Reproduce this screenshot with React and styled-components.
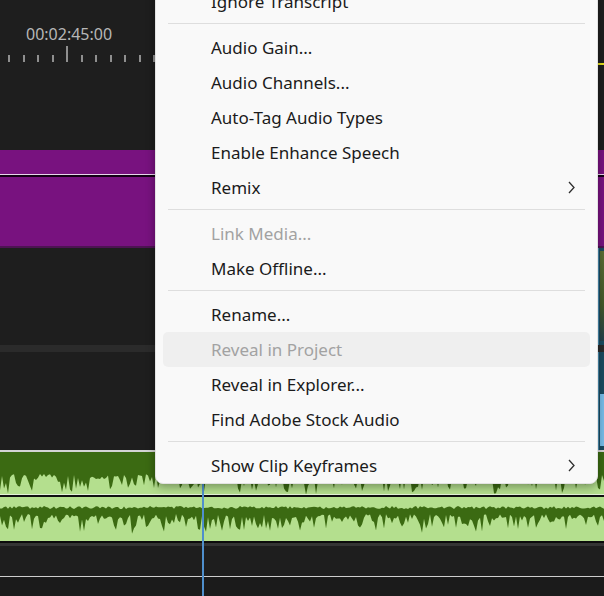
import styled, { createGlobalStyle } from "styled-components";

const GlobalStyle = createGlobalStyle`
  html, body {
    margin: 0;
    padding: 0;
    background: #1e1e1e;
    overflow: hidden;
  }
  * { box-sizing: border-box; }
`;

// deterministic noise so the waveform is the same each render
const rand = (() => {
  let s = 1337;
  return () => {
    s = (s * 16807) % 2147483647;
    return (s - 1) / 2147483646;
  };
})();

const buildUpper = () => {
  const pts = [];
  for (let x = 604; x >= 0; x -= 2) {
    let y = 22 + rand() * 5;
    if (rand() > 0.55) y += 4 + rand() * 12;
    pts.push(`${x},${y.toFixed(1)}`);
  }
  return `M0,0 L604,0 L${pts.join(" L")} Z`;
};

const buildLower = () => {
  const top = [];
  const bottom = [];
  for (let x = 0; x <= 604; x += 2) {
    top.push(`${x},${(9 + rand() * 3).toFixed(1)}`);
  }
  for (let x = 604; x >= 0; x -= 2) {
    let y = 17 + rand() * 5;
    if (rand() > 0.55) y += 3 + rand() * 12;
    bottom.push(`${x},${y.toFixed(1)}`);
  }
  return `M${top.join(" L")} L${bottom.join(" L")} Z`;
};

const UPPER = buildUpper();
const LOWER = buildLower();

const TICKS = Array.from({ length: 41 }, (_, i) => i);

const MENU = [
  { label: "Ignore Transcript" },
  "sep",
  { label: "Audio Gain..." },
  { label: "Audio Channels..." },
  { label: "Auto-Tag Audio Types" },
  { label: "Enable Enhance Speech" },
  { label: "Remix", sub: true },
  "sep",
  { label: "Link Media...", disabled: true },
  { label: "Make Offline..." },
  "sep",
  { label: "Rename..." },
  { label: "Reveal in Project", disabled: true, hover: true },
  { label: "Reveal in Explorer..." },
  { label: "Find Adobe Stock Audio" },
  "sep",
  { label: "Show Clip Keyframes", sub: true },
];

const Chevron = () => (
  <svg width="7" height="13" viewBox="0 0 7 13" fill="none">
    <path d="M1 1 L6 6.5 L1 12" stroke="#2e2e2e" strokeWidth="1.3" />
  </svg>
);

export default function App() {
  return (
    <>
      <GlobalStyle />
      <Timeline>
        <Ruler>
          <Timecode>00:02:45:00</Timecode>
          <TickRow>
            {TICKS.map((i) => (
              <Tick key={i} $major={i === 4} />
            ))}
          </TickRow>
          <WorkArea />
        </Ruler>

        <PurpleClip>
          <PurpleHead />
          <PurpleBody />
        </PurpleClip>

        <VideoTrack $h={97}>
          <EdgeClip>
            <Thumb />
          </EdgeClip>
        </VideoTrack>
        <TrackDivider />
        <VideoTrack $h={98}>
          <EdgeClip>
            <SkyBlock />
          </EdgeClip>
        </VideoTrack>

        <AudioClip>
          <Channel $h={42}>
            <Wave viewBox="0 0 604 42" preserveAspectRatio="none">
              <path d={UPPER} fill="#3b6a12" />
            </Wave>
          </Channel>
          <ChannelGap />
          <Channel $h={44}>
            <Wave viewBox="0 0 604 44" preserveAspectRatio="none">
              <path d={LOWER} fill="#3b6a12" />
            </Wave>
          </Channel>
        </AudioClip>
        <EmptyTrack $h={30} />
        <EmptyTrack $h={20} $light />

        <Playhead />

        <Menu>
          {MENU.map((item, i) =>
            item === "sep" ? (
              <Separator key={i} />
            ) : (
              <Item key={i} $disabled={item.disabled} $hover={item.hover}>
                <span>{item.label}</span>
                {item.sub && <Chevron />}
              </Item>
            )
          )}
        </Menu>
      </Timeline>
    </>
  );
}

const Timeline = styled.div`
  position: relative;
  width: 604px;
  height: 596px;
  overflow: hidden;
  display: flex;
  flex-direction: column;
  background: #1e1e1e;
`;

const Ruler = styled.div`
  height: 150px;
  flex: none;
  padding-top: 24px;
  display: flex;
  flex-direction: column;
`;

const Timecode = styled.div`
  padding-left: 26px;
  height: 20px;
  line-height: 20px;
  font-family: "Noto Sans", sans-serif;
  font-size: 16px;
  color: #b7b7b7;
`;

const TickRow = styled.div`
  margin-top: 2px;
  height: 16px;
  padding-left: 8px;
  display: flex;
  align-items: flex-end;
`;

const Tick = styled.div`
  flex: 0 0 14.55px;
  height: ${(p) => (p.$major ? 16 : 7)}px;
  &::before {
    content: "";
    display: block;
    width: 2px;
    height: 100%;
    background: #8f8f8f;
  }
`;

const WorkArea = styled.div`
  margin: 1px 0 0 560px;
  height: 2px;
  background: #e6df1c;
`;

const PurpleClip = styled.div`
  height: 98px;
  flex: none;
  display: flex;
  flex-direction: column;
  background: #78127f;
  border-bottom: 2px solid #4d1353;
`;

const PurpleHead = styled.div`
  height: 27px;
  border-bottom: 2px solid #120014;
  box-shadow: inset 0 -1px 0 #e9d3ec;
  margin-bottom: 0;
`;

const PurpleBody = styled.div`
  flex: 1;
`;

const VideoTrack = styled.div`
  height: ${(p) => p.$h}px;
  flex: none;
  display: flex;
  justify-content: flex-end;
`;

const TrackDivider = styled.div`
  height: 7px;
  flex: none;
  background: #2b2b2b;
`;

const EdgeClip = styled.div`
  width: 6px;
  background: #1b4b60;
  border-left: 1px solid #4b8db0;
  display: flex;
  flex-direction: column;
  justify-content: flex-end;
  padding: 3px 0 4px 1px;
`;

const Thumb = styled.div`
  flex: 1;
  background: linear-gradient(#5c6e35, #43592a 60%, #24404a);
`;

const SkyBlock = styled.div`
  height: 52px;
  background: #78bde9;
`;

const AudioClip = styled.div`
  flex: none;
  display: flex;
  flex-direction: column;
  border-top: 2px solid #d4d4d4;
  border-bottom: 2px solid #0c0c0c;
  box-shadow: 0 3px 0 #343434;
`;

const Channel = styled.div`
  height: ${(p) => p.$h}px;
  background: #b4df8e;
`;

const ChannelGap = styled.div`
  height: 3px;
  border-top: 1px solid #e2f3d6;
  background: #101010;
`;

const Wave = styled.svg`
  display: block;
  width: 100%;
  height: 100%;
`;

const EmptyTrack = styled.div`
  height: ${(p) => p.$h}px;
  flex: none;
  margin-top: ${(p) => (p.$light ? 0 : 3)}px;
  border-top: ${(p) => (p.$light ? "1px solid #cdcdcd" : "none")};
  background: ${(p) => (p.$light ? "#1b1b1b" : "#1e1e1e")};
`;

const Playhead = styled.div`
  position: absolute;
  left: 202px;
  top: 0;
  bottom: 0;
  width: 2px;
  background: #4f8fcc;
`;

const Menu = styled.div`
  position: absolute;
  left: 155px;
  top: -21px;
  width: 443px;
  padding: 4px 7px 0;
  background: #f9f9f9;
  border: 1px solid #e3e3e3;
  border-radius: 8px;
  box-shadow: 0 3px 10px rgba(0, 0, 0, 0.35);
  font-family: "Noto Sans", sans-serif;
`;

const Item = styled.div`
  height: 35px;
  line-height: 35px;
  padding: 0 15px 0 48px;
  display: flex;
  align-items: center;
  justify-content: space-between;
  font-size: 17px;
  border-radius: 5px;
  color: ${(p) => (p.$disabled ? "#a2a2a2" : "#1b1b1b")};
  background: ${(p) => (p.$hover ? "#efefef" : "transparent")};
  white-space: nowrap;
`;

const Separator = styled.div`
  height: 1px;
  margin: 4px 5px 6px;
  background: #dedede;
`;
